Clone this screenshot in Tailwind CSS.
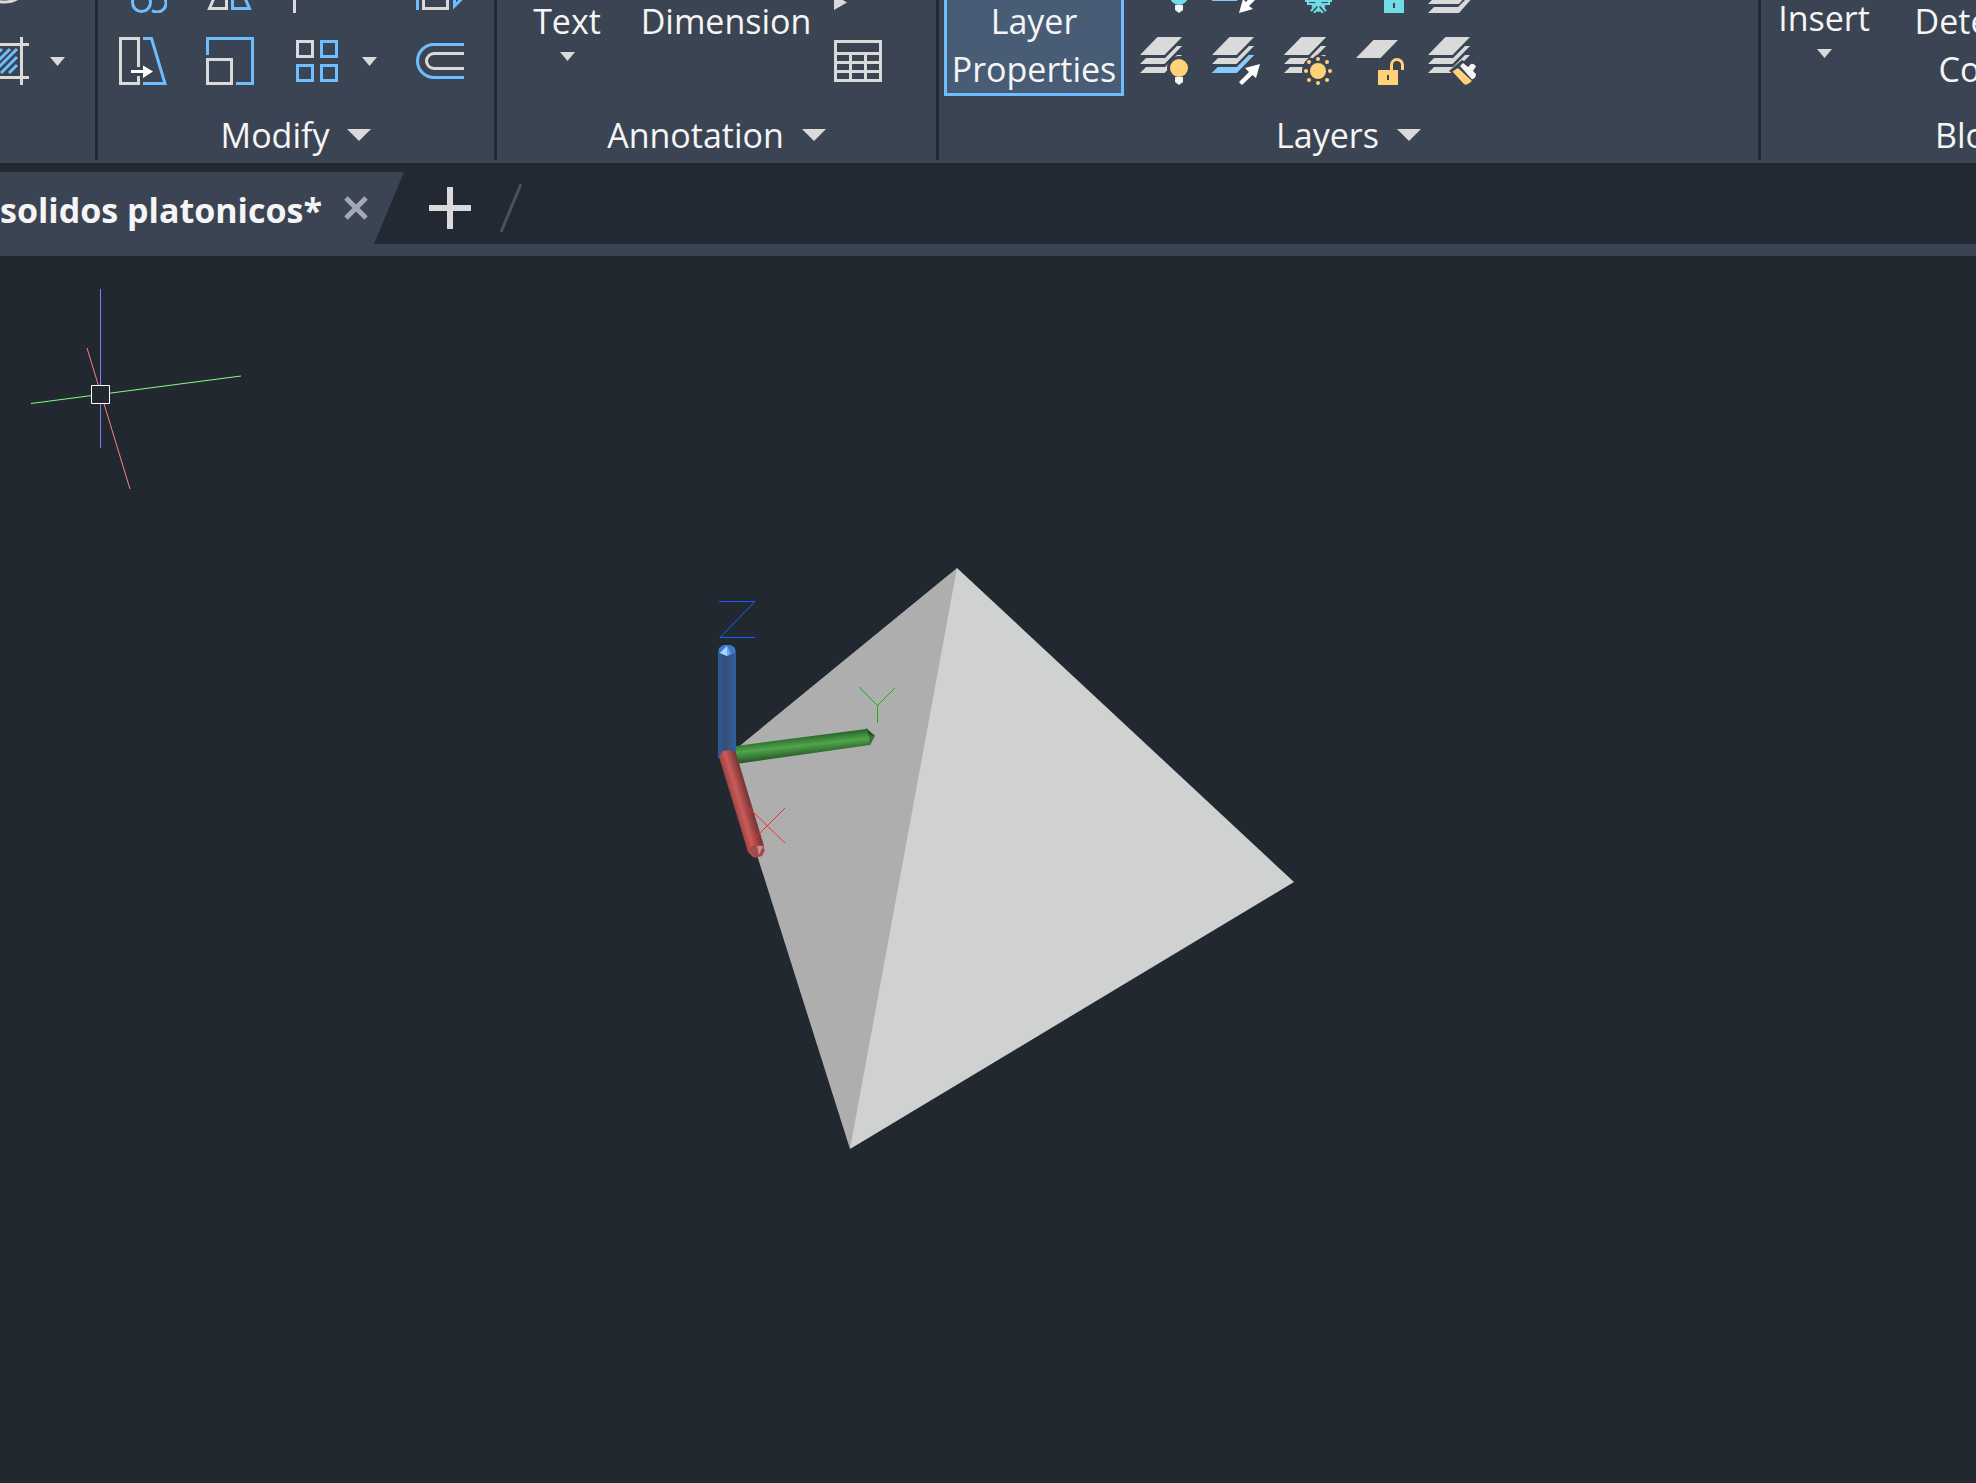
<!DOCTYPE html>
<html lang="en">
<head>
    <meta charset="UTF-8">
    <meta name="viewport" content="width=device-width, initial-scale=1.0">
    <title>solidos platonicos</title>
    <script src="https://cdn.jsdelivr.net/npm/@tailwindcss/browser@4"></script>
</head>
<body class="flex h-screen flex-col overflow-hidden bg-[#212830] font-['Open_Sans','Noto_Sans',sans-serif] text-[34px] leading-[48px] text-[#f5f5f5]">
    <svg class="hidden">
        <defs>
            <symbol id="sheets" viewBox="0 0 48 48">
                <path fill="#dadada" d="M0 18 17.5 0H42L24.5 18Z M0 27 6 21H25L37 9H42L24.5 27Z M0 36 6 30H25L37 18H42L24.5 36Z"/>
            </symbol>
            <symbol id="caret" viewBox="0 0 15 9"><path fill="#dadada" d="M0 0H15L7.5 9Z"/></symbol>
        </defs>
    </svg>

    <!-- Ribbon -->
    <header class="flex h-[163px] shrink-0 overflow-hidden bg-[#3b4453] pb-[3px]">
        <section class="flex w-[98px] shrink-0 flex-col overflow-hidden border-r-3 border-[#222933]">
            <div class="flex h-24 flex-col justify-end gap-6 pb-[11px]">
                <button class="-ml-5 size-12 shrink-0" aria-label="Ellipse">
                    <svg class="size-12" viewBox="0 0 48 48" fill="none" stroke="#dadada" stroke-width="3"><ellipse cx="24" cy="24" rx="20" ry="13"/></svg>
                </button>
                <div class="-ml-[19px] flex items-center gap-[21px]">
                    <button class="size-12 shrink-0" aria-label="Hatch">
                        <svg class="size-12" viewBox="0 0 48 48" fill="none" stroke-width="3">
                            <path stroke="#dadada" d="M0 7.5H48M0 40.5H48M7.5 0V48M40.5 0V48"/>
                            <path stroke="#6ebeff" d="M12 21 21 12M12 29 29 12M12 36 36 12M20 36 36 20M28 36 36 28"/>
                        </svg>
                    </button>
                    <button aria-label="Hatch options"><svg class="h-[9px] w-[15px]"><use href="#caret"/></svg></button>
                </div>
            </div>
        </section>

        <section class="flex w-[399px] shrink-0 flex-col border-r-3 border-[#222933]">
            <div class="flex h-24 flex-col justify-end gap-6 overflow-hidden pb-[11px] pl-[21px]">
                <div class="flex shrink-0 gap-[39px]">
                    <button aria-label="Copy">
                        <svg class="size-12" viewBox="0 0 48 48" fill="none" stroke="#6ebeff" stroke-width="3"><circle cx="22.5" cy="37.5" r="9"/><path d="M33 45.500A9 9 0 1 0 34 30"/></svg>
                    </button>
                    <button aria-label="Mirror">
                        <svg class="size-12" viewBox="0 0 48 48" fill="none" stroke-width="3"><path stroke="#dadada" d="M20.500 4V43.500H3.500Z"/><path stroke="#6ebeff" d="M26.500 4V43.500H43.500Z"/></svg>
                    </button>
                    <button aria-label="Fillet">
                        <svg class="size-12" viewBox="0 0 48 48" fill="none" stroke-width="3"><path stroke="#dadada" d="M1.500 48V20M20 1.500H48"/><path stroke="#6ebeff" d="M1.500 20A18 18 0 0 1 20 1.500"/></svg>
                    </button>
                    <button class="ml-9" aria-label="Stretch">
                        <svg class="size-12" viewBox="0 0 48 48" fill="none" stroke-width="3"><path stroke="#6ebeff" d="M1.500 0V45M38.500 20V41L48 31.500"/><path stroke="#dadada" d="M7.500 16H31.500V43.500H7.500Z"/></svg>
                    </button>
                </div>
                <div class="flex shrink-0 items-center gap-[39px]">
                    <button aria-label="Stretch object">
                        <svg class="size-12" viewBox="0 0 48 48" fill="none" stroke-width="3">
                            <path stroke="#dadada" d="M19.500 30V1.500H1.500V46.500H19.500V39"/>
                            <path stroke="#6ebeff" d="M24 1.500H32.500L46 46.500H24"/>
                            <path fill="#fff" stroke="none" d="M12 33H24V28.500L34 34.500 24 41V36H12Z"/>
                        </svg>
                    </button>
                    <button aria-label="Scale">
                        <svg class="size-12" viewBox="0 0 48 48" fill="none" stroke-width="3"><path stroke="#6ebeff" d="M1.500 18V1.500H46.500V46.500H30"/><path stroke="#dadada" d="M1.500 22.500H25.500V46.500H1.500Z"/></svg>
                    </button>
                    <div class="flex items-center gap-[21px]">
                        <button aria-label="Array">
                            <svg class="size-12" viewBox="0 0 48 48" fill="none" stroke-width="3"><path stroke="#dadada" d="M4.500 4.500H19.500V19.500H4.500Z"/><path stroke="#6ebeff" d="M28.500 4.500H43.500V19.500H28.500ZM4.500 28.500H19.500V43.500H4.500ZM28.500 28.500H43.500V43.500H28.500Z"/></svg>
                        </button>
                        <button aria-label="Array options"><svg class="h-[9px] w-[15px]"><use href="#caret"/></svg></button>
                    </div>
                    <button aria-label="Offset">
                        <svg class="size-12" viewBox="0 0 48 48" fill="none" stroke-width="3"><path stroke="#6ebeff" d="M48 7.500H18A16.500 16.500 0 0 0 18 40.500H48"/><path stroke="#dadada" d="M48 16.500H18A7.500 7.500 0 0 0 18 31.500H48"/></svg>
                    </button>
                </div>
            </div>
            <button class="mt-[15px] flex items-center justify-center gap-[18px]">Modify <svg class="h-3 w-6" viewBox="0 0 24 12"><path fill="#dadada" d="M0 0H24L12 12Z"/></svg></button>
        </section>

        <section class="flex w-[442px] shrink-0 flex-col border-r-3 border-[#222933]">
            <div class="flex h-24 items-end overflow-hidden pl-[39px]">
                <button class="flex h-24 w-[62px] shrink-0 flex-col items-center gap-[7px]"><span class="-mt-[3px]">Text</span><svg class="h-[9px] w-[15px]"><use href="#caret"/></svg></button>
                <button class="ml-11 flex h-24 w-[168px] shrink-0 flex-col items-center"><span class="-mt-[3px]">Dimension</span></button>
                <div class="ml-6 flex flex-col gap-6 pb-[11px]">
                    <button aria-label="Leader">
                        <svg class="size-12" viewBox="0 0 48 48"><path fill="#dadada" d="M0 30 13 37.500 0 45Z"/></svg>
                    </button>
                    <button aria-label="Table">
                        <svg class="size-12" viewBox="0 0 48 48" fill="none" stroke="#dadada" stroke-width="3"><path d="M1.500 4.500H46.500V43.500H1.500ZM0 16.500H48M0 25.500H48M0 34.500H48M16.500 16V44M31.500 16V44"/></svg>
                    </button>
                </div>
            </div>
            <button class="mt-[15px] flex items-center justify-center gap-[18px]">Annotation <svg class="h-3 w-6" viewBox="0 0 24 12"><path fill="#dadada" d="M0 0H24L12 12Z"/></svg></button>
        </section>

        <section class="flex w-[822px] shrink-0 flex-col border-r-3 border-[#222933]">
            <div class="flex h-24 items-end overflow-hidden pl-[5px]">
                <button class="flex w-[180px] shrink-0 flex-col items-center border-3 border-[#6ebeff] bg-[#485d75] pt-12"><span>Layer</span><span>Properties</span></button>
                <div class="ml-4 grid grid-cols-5 gap-6 pb-[11px]">
                    <button aria-label="Layer off">
                        <svg class="size-12" viewBox="0 0 48 48"><path fill="#dadada" d="M0 18 17.500 0H42L24.500 18Z"/><circle cx="39" cy="31" r="9" fill="#72dce6"/><path fill="#f5f5f5" d="M35 40H43V45L39 48 35 45Z"/></svg>
                    </button>
                    <button aria-label="Make current">
                        <svg class="size-12" viewBox="0 0 48 48"><use href="#sheets"/><path fill="#84cbff" d="M0 36 6 30H25L37 18H42L24.500 36Z"/><path fill="#fff" d="M27 48 31 34 34 37 41 29 45 33 37 41 41 44Z"/></svg>
                    </button>
                    <button aria-label="Freeze">
                        <svg class="size-12" viewBox="0 0 48 48" fill="none" stroke="#72dce6" stroke-width="2"><path d="M34.500 20V47M21 36H48M25 27 42 46M44 27 27 46M24 33V39H30M45 33V39H39M28 42 34.500 36 41 42M30 48 34.500 43 39 48"/></svg>
                    </button>
                    <button aria-label="Lock">
                        <svg class="size-12" viewBox="0 0 48 48"><path fill="#72dce6" fill-rule="evenodd" d="M28 33H48V48H28ZM37 38V43H39V38Z"/></svg>
                    </button>
                    <button aria-label="Match layer">
                        <svg class="size-12" viewBox="0 0 48 48"><path fill="#dadada" d="M0 39 6 33H30L42 21H47L31 39ZM0 48 6 42H30L42 30H47L31 48Z"/></svg>
                    </button>
                    <button aria-label="Turn all on">
                        <svg class="size-12" viewBox="0 0 48 48"><use href="#sheets"/><circle cx="39" cy="31" r="12" fill="#3b4453"/><circle cx="39" cy="31" r="9" fill="#ffd27a"/><path fill="#f5f5f5" d="M35 40H43V45L39 48 35 45Z"/></svg>
                    </button>
                    <button aria-label="Change to current">
                        <svg class="size-12" viewBox="0 0 48 48"><use href="#sheets"/><path fill="#84cbff" d="M0 36 6 30H25L37 18H42L24.500 36Z"/><path fill="#fff" d="M48 27 44 41 40.500 38 30 48 27 45 37 35 33 31Z"/></svg>
                    </button>
                    <button aria-label="Thaw all">
                        <svg class="size-12" viewBox="0 0 48 48"><use href="#sheets"/><circle cx="34" cy="34" r="16" fill="#3b4453"/><path fill="#dadada" d="M0 18 17.500 0H42L24.500 18ZM26 21 37 9H42L29 21Z"/>
                            <g fill="#ffd27a"><circle cx="34" cy="34" r="8"/><circle cx="34" cy="22" r="2"/><circle cx="43" cy="25" r="2"/><circle cx="46" cy="34" r="2"/><circle cx="43" cy="43" r="2"/><circle cx="34" cy="46" r="2"/><circle cx="25" cy="43" r="2"/><circle cx="22" cy="34" r="2"/><circle cx="25" cy="25" r="2"/></g>
                        </svg>
                    </button>
                    <button aria-label="Unlock">
                        <svg class="size-12" viewBox="0 0 48 48"><path fill="#dadada" d="M0 21 17.500 3H42L24.500 21Z"/><path fill="#ffd27a" fill-rule="evenodd" d="M22 33H42V48H22ZM31 38V43H33V38Z"/><path fill="none" stroke="#ffd27a" stroke-width="3" d="M35.500 34V28A5.500 5.500 0 0 1 46.500 28V33"/></svg>
                    </button>
                    <button aria-label="Match properties">
                        <svg class="size-12" viewBox="0 0 48 48"><use href="#sheets"/><path fill="#3b4453" d="M21 34 34 23 46 30V46H36Z"/><path fill="#ffd27a" d="M24.500 34.500 30 31 44 44 40 47Q37 49 35 46Z"/><path fill="#f5f5f5" d="M32 29 35 26 40 30 43 27Q46 26 48 29.500L45 34 48 37Q48 41 44 42.500Z"/></svg>
                    </button>
                </div>
            </div>
            <button class="mt-[15px] flex items-center justify-center gap-[18px]">Layers <svg class="h-3 w-6" viewBox="0 0 24 12"><path fill="#dadada" d="M0 0H24L12 12Z"/></svg></button>
        </section>

        <section class="flex w-[600px] shrink-0 flex-col">
            <div class="flex h-24 overflow-hidden pl-5">
                <button class="-mt-[6px] flex w-[86px] shrink-0 flex-col items-center gap-[7px]"><span>Insert</span><svg class="h-[9px] w-[15px]"><use href="#caret"/></svg></button>
                <button class="ml-[46px] -mt-[3px] flex w-[176px] shrink-0 flex-col items-center"><span class="whitespace-nowrap">Detect and</span><span>Convert</span></button>
            </div>
            <button class="mt-[15px] pl-[174px] text-left">Block</button>
        </section>
    </header>

    <!-- File tabs -->
    <nav class="flex h-[93px] shrink-0 items-end border-b-12 border-[#3b4453] bg-[#222933]">
        <div class="flex h-[72px] w-[404px] shrink-0 items-center bg-[#3b4453] [clip-path:polygon(0_0,100%_0,374px_100%,0_100%)]">
            <a href="#" class="w-[344px] shrink-0 pt-1 font-bold whitespace-nowrap">solidos platonicos*</a>
            <button aria-label="Close tab"><svg class="size-6" viewBox="0 0 24 24"><path stroke="#a3a9b5" stroke-width="5" d="M2 2 22 22M22 2 2 22"/></svg></button>
        </div>
        <button class="mb-[15px] ml-[25px]" aria-label="New tab"><svg class="size-[42px]" viewBox="0 0 42 42"><path stroke="#dadada" stroke-width="6" d="M21 0V42M0 21H42"/></svg></button>
        <svg class="mb-3 ml-[29px] h-12 w-[22px]" viewBox="0 0 22 48"><path stroke="#465263" stroke-width="3" d="M1 48 21 0"/></svg>
    </nav>

    <!-- Drawing area -->
    <main class="min-h-0 grow">
        <svg class="h-full w-full" viewBox="0 256 1976 1227" preserveAspectRatio="xMidYMid slice" fill="none">
            <defs>
                <linearGradient id="z"><stop stop-color="#2f5a98"/><stop offset=".4" stop-color="#364f78"/><stop offset="1" stop-color="#335d9c"/></linearGradient>
                <linearGradient id="y" gradientUnits="userSpaceOnUse" x1="800" y1="737" x2="802" y2="756"><stop stop-color="#2c6a2a"/><stop offset=".45" stop-color="#4fa54c"/><stop offset="1" stop-color="#2b5a29"/></linearGradient>
                <linearGradient id="x" gradientUnits="userSpaceOnUse" x1="731" y1="804" x2="748" y2="799"><stop stop-color="#8f3d3d"/><stop offset=".5" stop-color="#cd5a5a"/><stop offset="1" stop-color="#7d3838"/></linearGradient>
            </defs>

            <!-- Solid, the dark face runs under the light one so no seam shows -->
            <path fill="#aeaeae" d="M957 568 726 757 850 1149 960 900Z"/>
            <path fill="#d0d2d1" d="M957 568 1294 882 850 1149Z"/>

            <!-- UCS icon -->
            <path fill="url(#z)" d="M718 650H736V758H718Z"/>
            <path fill="#3f78c9" d="M719 653V648L723 645H731L735 648V653L727 656Z"/>
            <path fill="#a5d8ff" d="M727 646 720 653 727 656Z"/>
            <path fill="#6fa8ea" d="M727 646 727 656 731 654Z"/>
            <path fill="url(#y)" d="M736 746 866 729 874 736 870 745 736 764Z"/>
            <path fill="#35703a" d="M866 728 875 736 870 745 869 736Z"/>
            <path fill="#254d24" d="M866 728 875 736 869 735Z"/>
            <path fill="url(#x)" d="M719 757 723 751 731 750 736 753 764 846 760 855 753 857 748 852Z"/>
            <path fill="#a04c4c" d="M749 850 753 845H762L765 850 762 856 755 858Z"/>
            <path fill="#d98888" d="M757 846 763 846 759 855Z"/>
            <path stroke="#0a63ff" d="M719 601.500H755L720 637.500H755"/>
            <path stroke="#0fb60f" d="M859 687 877.500 705.500 895 688M877.500 705V723"/>
            <path stroke="#ff2a2a" d="M749 808 785 843M785 808 749 844"/>

            <!-- Crosshair -->
            <path stroke="#8080ff" d="M100.500 289V448"/>
            <path stroke="#80ff80" d="M31 403.500 241 376"/>
            <path stroke="#ff8080" d="M87 348 130 489"/>
            <path fill="#212830" stroke="#fff" d="M91.500 385.500H109.500V403.500H91.500Z"/>
        </svg>
    </main>
</body>
</html>
